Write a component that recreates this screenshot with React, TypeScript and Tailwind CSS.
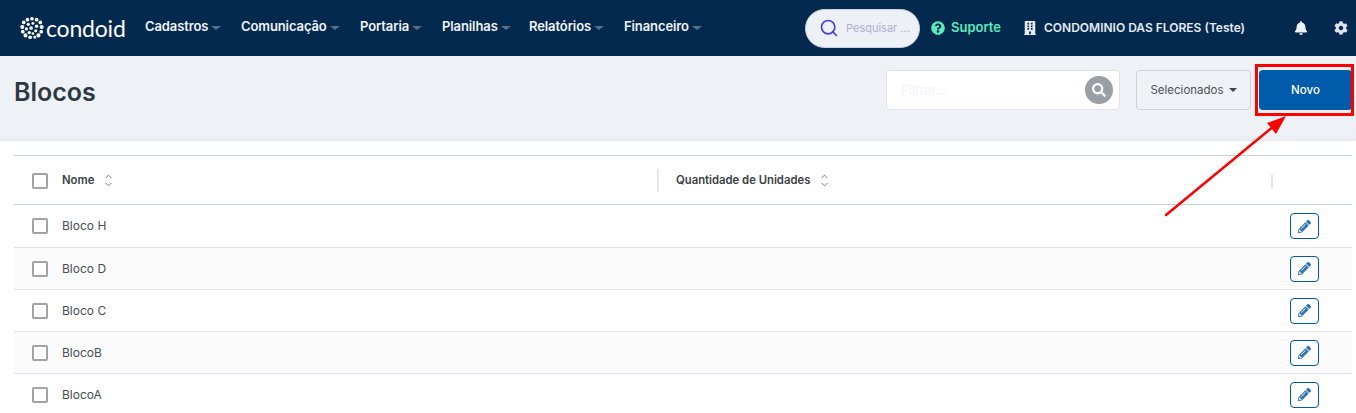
import React from "react";
import { ChevronDown, ChevronUp, Search } from "lucide-react";
import { FaBell, FaBuilding, FaCog, FaPencilAlt, FaQuestionCircle, FaSearch } from "react-icons/fa";

const menu = [
  { label: "Cadastros", w: "w-[96px]" },
  { label: "Comunicação", w: "w-[119px]" },
  { label: "Portaria", w: "w-[82px]" },
  { label: "Planilhas", w: "w-[87px]" },
  { label: "Relatórios", w: "w-[95px]" },
  { label: "Financeiro", w: "w-[90px]" },
];

const rows = ["Bloco H", "Bloco D", "Bloco C", "BlocoB", "BlocoA"];

const Logo = () => (
  <svg width="24" height="24" viewBox="0 0 26 24" fill="#fff">
    {[
      [13, 2, 2], [8, 3, 2], [18, 3, 2], [4, 6, 2], [22, 6, 2], [2.5, 11, 2.2], [23.5, 11, 2.2],
      [3, 16, 2], [23, 16, 2], [6, 20, 2.2], [20, 20, 2.2], [11, 22, 2], [16, 22, 1.6],
      [9, 8, 1.8], [14, 7, 1.6], [18, 10, 1.9], [7, 13, 1.7], [12, 12, 2], [17, 15, 1.7], [10, 17, 1.8], [14, 18, 1.5],
    ].map(([cx, cy, r], i) => (
      <circle key={i} cx={cx} cy={cy} r={r} />
    ))}
  </svg>
);

const Caret = () => <span className="ml-[3px] mt-[2px] h-0 w-0 border-x-[5px] border-t-[4px] border-x-transparent border-t-[#56708a]" />;

const SortIcon = () => (
  <span className="ml-[9px] flex flex-col text-[#444]">
    <ChevronUp size={11} strokeWidth={1.5} className="-mb-[3px]" />
    <ChevronDown size={11} strokeWidth={1.5} />
  </span>
);

const Checkbox = () => <span className="block h-4 w-4 rounded-[2px] border-2 border-[#a3a3a3] bg-white" />;

export default function App() {
  return (
    <div className="relative h-[413px] w-[1356px] overflow-hidden bg-white font-['Inter',sans-serif]">
      {/* Top bar */}
      <header className="flex h-14 items-center bg-[#03294f] pl-5 text-white">
        <div className="flex w-[125px] items-center gap-[2px]">
          <Logo />
          <span className="font-['Lato',sans-serif] text-[23px] leading-none tracking-[-0.2px]">condoid</span>
        </div>
        <nav className="flex -translate-y-px">
          {menu.map((item) => (
            <div key={item.label} className={`flex items-center ${item.w}`}>
              <span className="text-[13px] font-semibold tracking-[-0.1px] text-[#f0f3f7]">{item.label}</span>
              <Caret />
            </div>
          ))}
        </nav>
        <div className="ml-[91px] flex h-[39px] w-[115px] items-center rounded-[20px] border border-[#c9cfe0] bg-[#eef0f8] pl-[13px]">
          <Search size={20} strokeWidth={2} className="shrink-0 text-[#4a3fd6]" />
          <span className="ml-[7px] whitespace-nowrap text-[11px] text-[#aeb0c8]">Pesquisar ...</span>
        </div>
        <div className="ml-[11px] flex items-center gap-[6px] text-[#5eeabb]">
          <FaQuestionCircle size={14} />
          <span className="text-[13px] font-semibold">Suporte</span>
        </div>
        <div className="ml-[22px] flex items-center gap-[7px] text-[#e6ebf1]">
          <FaBuilding size={14} />
          <span className="whitespace-nowrap text-[12px] font-semibold">CONDOMINIO DAS FLORES (Teste)</span>
        </div>
        <FaBell size={14} className="ml-[49px] text-[#eef1f5]" />
        <FaCog size={14} className="ml-[26px] text-[#dfe4ea]" />
      </header>

      {/* Title band */}
      <div className="flex h-[85px] items-start bg-[#eef1f6] pt-[14px] shadow-[inset_0_-6px_6px_-6px_#dfe3ea]">
        <h1 className="ml-[14px] mt-[4px] text-[25px] font-semibold leading-[36px] text-[#2d3843]">Blocos</h1>
        <div className="ml-auto flex items-center">
          <div className="flex h-10 w-[234px] items-center justify-between rounded-[4px] border border-[#dfe3e8] bg-white pl-[14px] pr-[6px]">
            <span className="translate-y-px text-[13px] text-[#f1f2f4]">Filtrar...</span>
            <span className="flex h-7 w-7 items-center justify-center rounded-full bg-[#9a9ea5] text-white">
              <FaSearch size={14} />
            </span>
          </div>
          <div className="ml-4 flex h-10 w-[115px] items-center justify-center rounded-[4px] border border-[#cfd3d9] bg-[#eef1f6] text-[#4d5157]">
            <span className="translate-y-px text-[11.5px]">Selecionados</span>
            <span className="ml-[5px] h-0 w-0 border-x-[4px] border-t-[4px] border-x-transparent border-t-[#3f434a]" />
          </div>
          <div className="ml-2 mr-[4px] flex h-10 w-[93px] items-center justify-center rounded-[4px] bg-[#005bab] pt-[2px] text-[11.5px] font-medium text-white">
            Novo
          </div>
        </div>
      </div>

      {/* Table card */}
      <div className="rounded-tl-[5px] bg-white pl-[14px] pr-[4px] pt-[14px]">
        <div className="flex h-[50px] items-center border-y border-y-[#c5d0da] pt-px text-[11.3px] font-semibold text-[#3c4045]">
          <div className="flex w-[643px] items-center pl-[18px]">
            <Checkbox />
            <span className="ml-[14px]">Nome</span>
            <SortIcon />
          </div>
          <div className="flex w-[614px] items-center border-l-2 border-l-[#e2e7ee] py-[2px] pl-[17px]">
            <span>Quantidade de Unidades</span>
            <SortIcon />
          </div>
          <div className="h-[14px] border-l-2 border-l-[#e2e7ee]" />
        </div>
        {rows.map((name, i) => (
          <div
            key={name}
            className={`flex items-center border-b border-b-[#e2e4ec] pl-[18px] pr-[33px] text-[12px] text-[#4a4e53] ${i === 0 ? "h-[43px]" : "h-[42px]"} ${i % 2 === 1 ? "bg-[#fbfbfb]" : "bg-white"}`}
          >
            <Checkbox />
            <span className="ml-[14px]">{name}</span>
            <span className="ml-auto flex h-[26px] w-[29px] items-center justify-center rounded-[4px] border border-[#005bab] text-[#2c74ba]">
              <FaPencilAlt size={13} />
            </span>
          </div>
        ))}
      </div>

      {/* Annotation over the screenshot */}
      <div className="absolute left-[1255px] top-[64px] h-[52px] w-[99px] border-[3px] border-[#ff0000]" />
      <svg className="absolute left-0 top-0" width="1356" height="413" fill="none">
        <line x1="1166" y1="215" x2="1274" y2="126" stroke="#ff0000" strokeWidth="2.5" strokeLinecap="round" />
        <polygon points="1286,116 1267,123 1276,134" fill="#ff0000" />
      </svg>
    </div>
  );
}
